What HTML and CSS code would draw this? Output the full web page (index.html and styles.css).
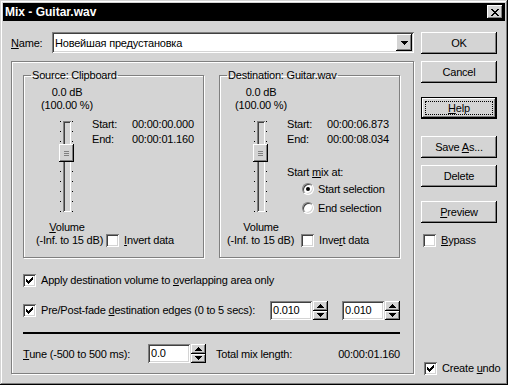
FILE: index.html
```html
<!DOCTYPE html>
<html lang="en">
<head>
  <meta charset="UTF-8">
  <title>Mix - Guitar.wav</title>
  <link rel="stylesheet" href="styles.css">
</head>
<body>
  <div class="window">
    <div class="titlebar">
      <span>Mix - Guitar.wav</span>
      <div class="close">
        <svg width="8" height="7" viewBox="0 0 8 7"><path d="M0 0h2v1H0zM6 0h2v1H6zM1 1h2v1H1zM5 1h2v1H5zM2 2h4v1H2zM3 3h2v1H3zM2 4h4v1H2zM1 5h2v1H1zM5 5h2v1H5zM0 6h2v1H0zM6 6h2v1H6z"/></svg>
      </div>
    </div>
    <div class="content">
      <div class="main">
        <div class="name-row">
          <label><u>N</u>ame:</label>
          <div class="combo">
            <span>Новейшая предустановка</span>
            <div class="drop"><svg width="7" height="4" viewBox="0 0 7 4"><path d="M0 0h7v1H0zM1 1h5v1H1zM2 2h3v1H2zM3 3h1v1H3z"/></svg></div>
          </div>
        </div>
        <div class="panel">
          <div class="groups">
            <!-- Source -->
            <fieldset class="group src">
              <legend>Source: Clipboard</legend>
              <div class="level">0.0 dB<br>(100.00 %)</div>
              <div class="mid">
                <div class="slider"><div class="track"></div><div class="thumb"></div></div>
                <div class="times">
                  <span>Start:</span><span>00:00:00.000</span>
                  <span>End:</span><span>00:00:01.160</span>
                </div>
              </div>
              <div class="level vol"><u>V</u>olume</div>
              <div class="bottom">
                <span>(-Inf. to 15 dB)</span>
                <span class="cb"></span>
                <span><u>I</u>nvert data</span>
              </div>
            </fieldset>
            <!-- Destination -->
            <fieldset class="group dst">
              <legend>Destination: Guitar.wav</legend>
              <div class="level">0.0 dB<br>(100.00 %)</div>
              <div class="mid">
                <div class="slider"><div class="track"></div><div class="thumb"></div></div>
                <div class="times-col">
                  <div class="times">
                    <span>Start:</span><span>00:00:06.873</span>
                    <span>End:</span><span>00:00:08.034</span>
                  </div>
                  <div class="mix">Start <u>m</u>ix at:</div>
                  <div class="radio-row first"><span class="radio on"></span><span>Start selection</span></div>
                  <div class="radio-row"><span class="radio"></span><span>End selection</span></div>
                </div>
              </div>
              <div class="level vol">Volume</div>
              <div class="bottom">
                <span>(-Inf. to 15 dB)</span>
                <span class="cb"></span>
                <span>Inve<u>r</u>t data</span>
              </div>
            </fieldset>
          </div>

          <div class="opt first">
            <span class="cb"><svg width="7" height="7" viewBox="0 0 7 7"><path d="M6 0h1v1H6zM5 1h2v1H5zM0 2h1v1H0zM4 2h3v1H4zM0 3h2v1H0zM3 3h3v1H3zM0 4h5v1H0zM1 5h3v1H1zM2 6h1v1H2z"/></svg></span>
            <span>Apply destination volume to <u>o</u>verlapping area only</span>
          </div>
          <div class="opt fade">
            <span class="cb"><svg width="7" height="7" viewBox="0 0 7 7"><path d="M6 0h1v1H6zM5 1h2v1H5zM0 2h1v1H0zM4 2h3v1H4zM0 3h2v1H0zM3 3h3v1H3zM0 4h5v1H0zM1 5h3v1H1zM2 6h1v1H2z"/></svg></span>
            <span class="fade-label">Pre/Post-fade <u>d</u>estination edges (0 to 5 secs):</span>
            <div class="spinbox">
              <div class="field">0.010</div>
              <div class="spin">
                <div class="spin-btn"><svg width="7" height="4" viewBox="0 0 7 4"><path d="M3 0h1v1H3zM2 1h3v1H2zM1 2h5v1H1zM0 3h7v1H0z"/></svg></div>
                <div class="spin-btn"><svg width="7" height="4" viewBox="0 0 7 4"><path d="M0 0h7v1H0zM1 1h5v1H1zM2 2h3v1H2zM3 3h1v1H3z"/></svg></div>
              </div>
            </div>
            <div class="spinbox second">
              <div class="field">0.010</div>
              <div class="spin">
                <div class="spin-btn"><svg width="7" height="4" viewBox="0 0 7 4"><path d="M3 0h1v1H3zM2 1h3v1H2zM1 2h5v1H1zM0 3h7v1H0z"/></svg></div>
                <div class="spin-btn"><svg width="7" height="4" viewBox="0 0 7 4"><path d="M0 0h7v1H0zM1 1h5v1H1zM2 2h3v1H2zM3 3h1v1H3z"/></svg></div>
              </div>
            </div>
          </div>

          <div class="sep"></div>

          <div class="tune-row">
            <span class="tune-label"><u>T</u>une (-500 to 500 ms):</span>
            <div class="spinbox">
              <div class="field">0.0</div>
              <div class="spin">
                <div class="spin-btn"><svg width="7" height="4" viewBox="0 0 7 4"><path d="M3 0h1v1H3zM2 1h3v1H2zM1 2h5v1H1zM0 3h7v1H0z"/></svg></div>
                <div class="spin-btn"><svg width="7" height="4" viewBox="0 0 7 4"><path d="M0 0h7v1H0zM1 1h5v1H1zM2 2h3v1H2zM3 3h1v1H3z"/></svg></div>
              </div>
            </div>
            <span class="total">Total mix length:</span>
            <span class="total-val">00:00:01.160</span>
          </div>
        </div>
      </div>

      <div class="side">
        <button class="btn ok"><span>OK</span></button>
        <button class="btn cancel"><span>Cancel</span></button>
        <button class="btn help default"><span><u>H</u>elp</span></button>
        <button class="btn save"><span>Save <u>A</u>s...</span></button>
        <button class="btn delete"><span>Delete</span></button>
        <button class="btn preview"><span><u>P</u>review</span></button>
        <div class="side-check bypass"><span class="cb"></span><span><u>B</u>ypass</span></div>
        <div class="side-check undo">
          <span class="cb"><svg width="7" height="7" viewBox="0 0 7 7"><path d="M6 0h1v1H6zM5 1h2v1H5zM0 2h1v1H0zM4 2h3v1H4zM0 3h2v1H0zM3 3h3v1H3zM0 4h5v1H0zM1 5h3v1H1zM2 6h1v1H2z"/></svg></span>
          <span>Create <u>u</u>ndo</span>
        </div>
      </div>
    </div>
  </div>
</body>
</html>
```

FILE: styles.css
```css
:root {
  --face: #d4d4d4;
  --light: #fff;
  --shadow: #808080;
  --dark: #404040;
  --font: "Liberation Sans", Arial, sans-serif;
}
* { box-sizing: border-box; }
html, body { margin:0; padding:0; }
body { font-family:var(--font); font-size:11px; letter-spacing:-0.2px; color:#000; background:var(--face); }
u { text-decoration:underline; text-underline-offset:1px; }
svg { display:block; }

/* Window frame */
.window { width:508px; height:385px; padding:3px; background:var(--face);
  box-shadow: inset -1px -1px #000, inset 1px 1px var(--face), inset -2px -2px var(--shadow), inset 2px 2px var(--light);
}
.titlebar { height:18px; background:#000; color:#fff; font-weight:bold; font-size:12px; letter-spacing:0;
  display:flex; align-items:center; justify-content:space-between; padding:0 2px;
}
.close { width:16px; height:14px; background:var(--face); display:flex; align-items:center; justify-content:center;
  box-shadow: inset -1px -1px #000, inset 1px 1px var(--light), inset -2px -2px var(--shadow);
}

/* Layout */
.content { display:flex; padding:11px 5px 0 8px; }
.main { width:403px; }
.side { width:76px; margin-left:7px; display:flex; flex-direction:column; }

/* Name combo */
.name-row { display:flex; align-items:center; height:21px; }
.name-row label { width:41px; }
.combo { flex:1; height:21px; background:#fff; display:flex; align-items:center; justify-content:space-between; padding:2px;
  box-shadow: inset 1px 1px var(--shadow), inset -1px -1px var(--light), inset 2px 2px var(--dark), inset -2px -2px var(--face);
}
.combo span { padding-left:1px; }
.drop { width:16px; height:17px; background:var(--face); display:flex; align-items:center; justify-content:center;
  box-shadow: inset -1px -1px #000, inset 1px 1px var(--light), inset -2px -2px var(--shadow);
}

/* Etched panel */
.panel { margin-top:8px; border:1px solid var(--shadow); padding:7px 13px 10px 11px;
  box-shadow: inset 1px 1px var(--light), 1px 1px var(--light);
}
.groups { display:flex; gap:15px; }
.group { width:181px; margin:0; padding:0 0 10px 0; min-width:0; border:1px solid var(--shadow);
  box-shadow: inset 1px 1px var(--light), 1px 1px var(--light);
}
.group legend { padding:0 1px; margin-left:7px; line-height:13px; }
.level { width:86px; text-align:center; line-height:13px; margin-top:4px; }
.vol { margin-top:9px; }
.mid { display:flex; align-items:flex-start; margin-top:9px; height:91px; }

/* Trackbar */
.slider { position:relative; width:15px; height:91px; margin-left:35px;
  background:
    repeating-linear-gradient(#000 0 1px, transparent 1px 10px) 1px 0 / 1px 100% no-repeat,
    repeating-linear-gradient(#000 0 1px, transparent 1px 10px) 13px 0 / 1px 100% no-repeat;
}
.track { width:8px; height:100%; margin:0 auto; background:var(--face);
  box-shadow: inset 1px 1px var(--shadow), inset -1px -1px var(--light), inset 2px 2px var(--dark), inset -2px -2px var(--face);
}
.thumb { position:absolute; left:0; top:23px; width:15px; height:18px; background:var(--face);
  box-shadow: inset -1px -1px #000, inset 1px 1px var(--light), inset -2px -2px var(--shadow);
}
.thumb::after { content:""; position:absolute; left:5px; top:7px; width:5px; height:5px;
  background: repeating-linear-gradient(var(--shadow) 0 1px, transparent 1px 2px);
}

.times { display:grid; grid-template-columns:40px auto; row-gap:2px; line-height:13px; margin-left:18px; margin-top:-3px; }
.times-col { margin-left:19px; margin-top:-3px; }
.times-col .times { margin:0; }
.mix { line-height:13px; margin-top:20px; }
.radio-row { display:flex; align-items:center; height:13px; margin-top:6px; padding-left:15px; }
.radio-row.first { margin-top:3px; }
.radio { position:relative; width:12px; height:12px; border-radius:50%; background:#fff; margin-right:4px;
  border:1px solid; border-color:var(--shadow) var(--light) var(--light) var(--shadow);
  box-shadow: inset 1px 1px var(--dark), inset -1px -1px var(--face);
}
.radio.on::after { content:""; position:absolute; left:3px; top:3px; width:4px; height:4px; border-radius:50%; background:#000; }

.dst .slider { margin-left:33px; }
.dst .level { width:82px; }

.bottom { display:flex; align-items:center; line-height:13px; padding-left:12px; }
.bottom .cb { margin:0 5px 0 3px; }
.dst .bottom { padding-left:7px; }
.dst .bottom .cb { margin-left:7px; }

/* Checkbox */
.cb { width:13px; height:13px; flex:none; background:#fff; display:flex; align-items:center; justify-content:center;
  box-shadow: inset 1px 1px var(--shadow), inset -1px -1px var(--light), inset 2px 2px var(--dark), inset -2px -2px var(--face);
}

/* Options */
.opt { display:flex; align-items:center; line-height:13px; }
.opt .cb { margin-right:5px; }
.opt.first { margin-top:16px; }
.opt.fade { margin-top:14px; height:19px; }
.fade-label { width:230px; }
.spinbox { display:flex; gap:1px; }
.spinbox.second { margin-left:14px; }
.field { width:42px; height:19px; background:#fff; padding:0 3px; line-height:19px;
  box-shadow: inset 1px 1px var(--shadow), inset -1px -1px var(--light), inset 2px 2px var(--dark), inset -2px -2px var(--face);
}
.spin { width:15px; height:19px; display:flex; flex-direction:column; }
.spin-btn { flex:1; background:var(--face); display:flex; align-items:center; justify-content:center;
  box-shadow: inset -1px -1px #000, inset 1px 1px var(--light), inset -2px -2px var(--shadow);
}
.sep { height:2px; background:#000; margin-top:12px; }
.tune-row { display:flex; align-items:center; height:19px; margin-top:10px; }
.tune-label { width:125px; }
.total { margin-left:10px; }
.total-val { margin-left:auto; }

/* Buttons */
.btn { width:76px; height:22px; padding:0; border:none; font:inherit; letter-spacing:inherit; color:#000; background:var(--face);
  position:relative; display:flex; align-items:center; justify-content:center;
  box-shadow: inset -1px -1px #000, inset 1px 1px var(--light), inset -2px -2px var(--shadow);
}
.btn.default { border:1px solid #000; }
.btn.default::after { content:""; position:absolute; inset:3px; border:1px dotted #000; }
.cancel { margin-top:7px; }
.help { margin-top:14px; }
.save { margin-top:17px; }
.delete { margin-top:7px; }
.preview { margin-top:14px; }
.side-check { display:flex; align-items:center; line-height:13px; padding-left:2px; white-space:nowrap; }
.side-check .cb { margin-right:5px; }
.bypass { margin-top:11px; }
.undo { margin-top:auto; margin-bottom:-1px; padding-left:3px; }
```
